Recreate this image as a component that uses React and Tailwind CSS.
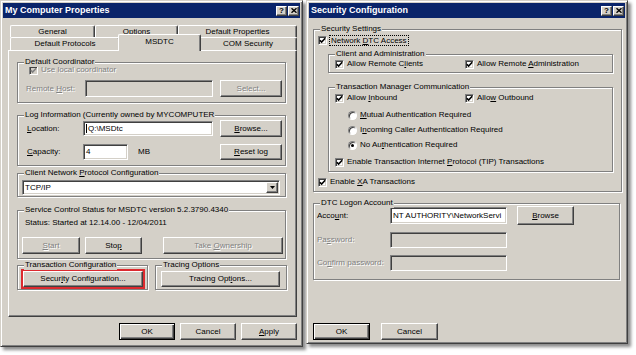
import React from 'react';

const FACE = 'bg-[#d4d0c8]';
const RAISED = 'border border-t-white border-l-white border-r-[#404040] border-b-[#404040] shadow-[inset_-1px_-1px_0_#808080]';
const DEFAULT_BTN = 'border border-black shadow-[inset_1px_1px_0_#fff,inset_-1px_-1px_0_#404040,inset_-2px_-2px_0_#808080]';
const SUNKEN = 'border border-t-[#808080] border-l-[#808080] border-r-white border-b-white shadow-[inset_1px_1px_0_#404040,inset_-1px_-1px_0_#d4d0c8]';
const DIS = 'text-[#808080] [text-shadow:1px_1px_0_#fff]';

const Btn = ({ children, isDefault, disabled, className = '' }) => (
    <div className={`${isDefault ? DEFAULT_BTN : RAISED} ${FACE} flex items-center justify-center shrink-0 whitespace-nowrap ${disabled ? DIS : ''} ${className}`}>
        <span>{children}</span>
    </div>
);

const Input = ({ children, disabled, caret, className = '' }) => (
    <div className={`${SUNKEN} ${disabled ? FACE : 'bg-white'} flex items-center pl-[2px] overflow-hidden whitespace-nowrap shrink-0 ${className}`}>
        {caret && <span className="w-px h-[9px] bg-black mr-px" />}
        <span>{children}</span>
    </div>
);

const Check = ({ disabled }) => (
    <span className={`w-[9px] h-[9px] shrink-0 ${SUNKEN} ${disabled ? FACE : 'bg-white'} flex items-center justify-center`}>
        <svg width="7" height="7" viewBox="0 0 7 7">
            <path d="M0.8 3.2 L2.6 5 L6.2 1.2" stroke={disabled ? '#808080' : '#000'} strokeWidth="1.6" fill="none" />
        </svg>
    </span>
);

const CheckLabel = ({ children, disabled, className = '' }) => (
    <div className={`flex items-center shrink-0 ${className}`}>
        <Check disabled={disabled} />
        <span className={`ml-[3px] whitespace-nowrap ${disabled ? DIS : ''}`}>{children}</span>
    </div>
);

const RadioLabel = ({ children, selected, className = '' }) => (
    <div className={`flex items-center h-[10px] ${className}`}>
        <span className="w-[9px] h-[9px] shrink-0 rounded-full bg-white border border-t-[#808080] border-l-[#808080] border-r-white border-b-white shadow-[inset_1px_1px_0_#404040] flex items-center justify-center">
            {selected && <span className="w-[3px] h-[3px] rounded-full bg-black" />}
        </span>
        <span className="ml-[3px] whitespace-nowrap">{children}</span>
    </div>
);

const Group = ({ title, className = '', children }) => (
    <div className={`relative border border-[#808080] shadow-[1px_1px_0_#fff,inset_1px_1px_0_#fff] shrink-0 ${className}`}>
        <span className={`absolute -top-[6px] left-[6px] ${FACE} px-[1px] h-[10px] flex items-center whitespace-nowrap`}>
            <span>{title}</span>
        </span>
        {children}
    </div>
);

const CapBtn = ({ children, className = '' }) => (
    <div className={`w-[11px] h-[10px] ${RAISED} ${FACE} flex items-center justify-center ${className}`}>{children}</div>
);

const Window = ({ title, className = '', children }) => (
    <div className={`${FACE} border border-t-[#d4d0c8] border-l-[#d4d0c8] border-r-[#404040] border-b-[#404040] shadow-[inset_1px_1px_0_#fff,inset_-1px_-1px_0_#808080,3px_3px_3px_rgba(0,0,0,0.45)] p-[2px] flex flex-col shrink-0 ${className}`}>
        <div className="h-[15px] bg-[#0a246a] flex items-center pl-[2px] pr-[1px] shrink-0">
            <span className="flex-1 text-white font-bold text-[9px]">{title}</span>
            <div className="flex">
                <CapBtn><span className="font-bold text-[8px]">?</span></CapBtn>
                <CapBtn className="ml-[1px]">
                    <svg width="6" height="5" viewBox="0 0 6 5">
                        <path d="M0.5 0.3 L5.5 4.7 M5.5 0.3 L0.5 4.7" stroke="#000" strokeWidth="1.4" />
                    </svg>
                </CapBtn>
            </div>
        </div>
        {children}
    </div>
);

const Tab = ({ label, className = '' }) => (
    <div className={`${FACE} border-t border-l border-r border-t-white border-l-white border-r-[#404040] shadow-[inset_-1px_0_0_#808080] rounded-t-[2px] flex items-center justify-center shrink-0 whitespace-nowrap ${className}`}>
        <span>{label}</span>
    </div>
);

const Properties = () => (
    <Window title="My Computer Properties" className="w-[303px] h-[347px]">
        <div className="flex flex-col pl-[7px] pr-[3px] mt-[7px]">
            <div className="flex h-[12px]">
                <Tab className="w-[85px] h-[12px]" label="General" />
                <Tab className="w-[83px] h-[12px]" label="Options" />
                <Tab className="w-[119px] h-[12px]" label="Default Properties" />
            </div>
            <div className="flex h-[13px] items-end">
                <Tab className="w-[110px] h-[13px]" label="Default Protocols" />
                <Tab className="w-[83px] h-[17px] -mx-[2px] relative z-10 translate-y-[1px] pb-[2px]" label="MSDTC" />
                <Tab className="w-[98px] h-[13px]" label="COM Security" />
            </div>
        </div>

        <div className={`ml-[5px] mr-[3px] h-[267px] ${RAISED} flex flex-col pl-[8px]`}>
            <Group title="Default Coordinator" className="w-[269px] h-[41px] mt-[11px]">
                <div className="flex items-center h-[10px] mt-[2px] pl-[11px]">
                    <CheckLabel disabled>Use local coordinator</CheckLabel>
                </div>
                <div className="flex items-center h-[17px] mt-[5px] pl-[8px] pr-[3px]">
                    <span className={`w-[59px] ${DIS}`}>Remote <u>H</u>ost:</span>
                    <Input disabled className="w-[128px] h-[17px]" />
                    <Btn disabled className="w-[62px] h-[17px] ml-auto">Select...</Btn>
                </div>
            </Group>

            <Group title="Log Information (Currently owned by MYCOMPUTER" className="w-[269px] h-[51px] mt-[12px]">
                <div className="flex items-center h-[17px] mt-[4px] pl-[9px] pr-[3px]">
                    <span className="w-[56px]"><u>L</u>ocation:</span>
                    <Input caret className="w-[130px] h-[15px]">Q:\MSDtc</Input>
                    <Btn className="w-[62px] h-[17px] ml-auto"><u>B</u>rowse...</Btn>
                </div>
                <div className="flex items-center h-[16px] mt-[7px] pl-[9px] pr-[3px]">
                    <span className="w-[56px]"><u>C</u>apacity:</span>
                    <Input className="w-[45px] h-[16px]">4</Input>
                    <span className="ml-[10px]">MB</span>
                    <Btn className="w-[62px] h-[16px] ml-auto"><u>R</u>eset log</Btn>
                </div>
            </Group>

            <Group title={<>Client Network <u>P</u>rotocol Configuration</>} className="w-[269px] h-[24px] mt-[7px]">
                <div className={`ml-[4px] mt-[6px] w-[258px] h-[15px] ${SUNKEN} bg-white flex items-center`}>
                    <span className="flex-1 pl-[2px]">TCP/IP</span>
                    <div className={`w-[12px] h-[11px] mr-[1px] ${RAISED} ${FACE} flex items-center justify-center`}>
                        <svg width="5" height="3" viewBox="0 0 5 3"><path d="M0 0h5L2.5 3z" fill="#000" /></svg>
                    </div>
                </div>
            </Group>

            <Group title="Service Control Status for MSDTC version 5.2.3790.4340" className="w-[269px] h-[49px] mt-[13px]">
                <div className="mt-[7px] pl-[7px] h-[10px] flex items-center">Status: Started at 12.14.00 - 12/04/2011</div>
                <div className="flex items-center mt-[9px] pl-[4px] h-[17px]">
                    <Btn disabled className="w-[58px] h-[17px]"><u>S</u>tart</Btn>
                    <Btn className="w-[57px] h-[17px] ml-[5px]">Sto<u>p</u></Btn>
                    <Btn disabled className="w-[120px] h-[17px] ml-[21px]">Take <u>O</u>wnership</Btn>
                </div>
            </Group>

            <div className="flex mt-[6px] gap-[7px]">
                <Group title="Transaction Configuration" className="w-[131px] h-[25px]">
                    <Btn className="w-[120px] h-[16px] ml-[5px] mt-[5px] outline-2 outline-[#dc2a2f]">Secur<u>i</u>ty Configuration...</Btn>
                </Group>
                <Group title="Tracing Options" className="w-[132px] h-[25px]">
                    <Btn className="w-[119px] h-[16px] ml-[5px] mt-[5px]">Tracing Opt<u>i</u>ons...</Btn>
                </Group>
            </div>
        </div>

        <div className="flex justify-end gap-[5px] pr-[3px] mt-[6px]">
            <Btn isDefault className="w-[56px] h-[17px]">OK</Btn>
            <Btn className="w-[56px] h-[17px]">Cancel</Btn>
            <Btn className="w-[56px] h-[17px]"><u>A</u>pply</Btn>
        </div>
    </Window>
);

const SecurityConfig = () => (
    <Window title="Security Configuration" className="w-[322px] h-[344px] ml-[3px]">
        <div className="flex flex-col pl-[4px]">
            <Group title="Security Settings" className="w-[309px] h-[163px] mt-[11px]">
                <div className="flex items-center h-[11px] mt-[5px] pl-[4px]">
                    <Check />
                    <span className="ml-[2px] px-[1px] h-[11px] border border-dotted border-black flex items-center whitespace-nowrap">
                        <span>Network <u>D</u>TC Access</span>
                    </span>
                </div>

                <Group title="Client and Administration" className="w-[285px] h-[19px] mt-[8px] ml-[14px]">
                    <div className="flex items-center h-[10px] mt-[4px] pl-[6px]">
                        <CheckLabel className="w-[130px]">Allow Remote C<u>l</u>ients</CheckLabel>
                        <CheckLabel>Allow Remote <u>A</u>dministration</CheckLabel>
                    </div>
                </Group>

                <Group title="Transaction Manager Communication" className="w-[285px] h-[85px] mt-[14px] ml-[14px]">
                    <div className="flex items-center h-[10px] mt-[5px] pl-[6px]">
                        <CheckLabel className="w-[130px]">Allow <u>I</u>nbound</CheckLabel>
                        <CheckLabel>Allo<u>w</u> Outbound</CheckLabel>
                    </div>
                    <div className="flex flex-col pl-[19px]">
                        <RadioLabel className="mt-[7px]"><u>M</u>utual Authentication Required</RadioLabel>
                        <RadioLabel className="mt-[5px]">I<u>n</u>coming Caller Authentication Required</RadioLabel>
                        <RadioLabel className="mt-[5px]" selected>No Au<u>t</u>hentication Required</RadioLabel>
                    </div>
                    <div className="flex items-center h-[10px] mt-[7px] pl-[6px]">
                        <CheckLabel>Enable Transaction Internet <u>P</u>rotocol (TIP) Transactions</CheckLabel>
                    </div>
                </Group>

                <div className="flex items-center h-[10px] mt-[5px] pl-[4px]">
                    <CheckLabel>Enable <u>X</u>A Transactions</CheckLabel>
                </div>
            </Group>

            <Group title="DTC Logon Account" className="w-[307px] h-[77px] mt-[11px]">
                <div className="flex items-center h-[19px] mt-[2px] pl-[3px]">
                    <span className="w-[73px]">Acco<u>u</u>nt:</span>
                    <Input className="w-[117px] h-[17px]">NT AUTHORITY\NetworkServi</Input>
                    <Btn className="w-[57px] h-[19px] ml-[10px]"><u>B</u>rowse</Btn>
                </div>
                <div className="flex items-center h-[16px] mt-[7px] pl-[3px]">
                    <span className={`w-[73px] ${DIS}`}>Pa<u>s</u>sword:</span>
                    <Input disabled className="w-[117px] h-[16px]" />
                </div>
                <div className="flex items-center h-[16px] mt-[7px] pl-[3px]">
                    <span className={`w-[73px] ${DIS}`}>Co<u>n</u>firm password:</span>
                    <Input disabled className="w-[117px] h-[16px]" />
                </div>
            </Group>

            <div className="flex mt-[43px]">
                <Btn isDefault className="w-[57px] h-[17px]">OK</Btn>
                <Btn className="w-[57px] h-[17px] ml-[11px]">Cancel</Btn>
            </div>
        </div>
    </Window>
);

export default function App() {
    return (
        <div className="w-[636px] h-[355px] bg-white flex items-start overflow-hidden font-['Liberation_Sans',Arial,sans-serif] text-[8px] leading-none text-black">
            <Properties />
            <SecurityConfig />
        </div>
    );
}
